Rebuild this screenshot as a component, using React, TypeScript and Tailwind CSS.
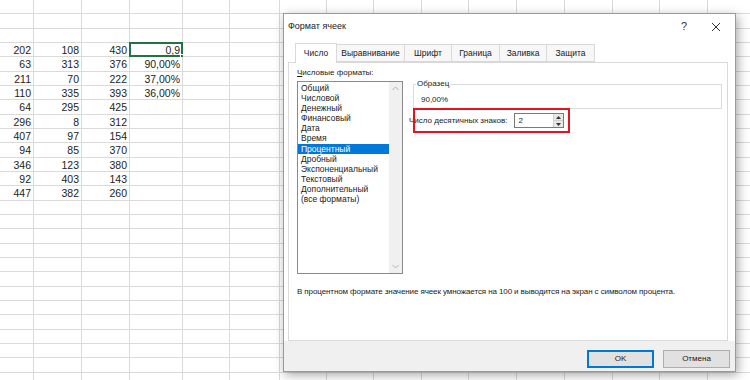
import React from 'react';

const colWidths = [34, 48, 48, 53, 47, 50, 47, 47, 48, 47, 48, 48, 48, 47, 48, 48, 48];

const data: string[][] = [
  ['202', '108', '430', '0,9'],
  ['63', '313', '376', '90,00%'],
  ['211', '70', '222', '37,00%'],
  ['110', '335', '393', '36,00%'],
  ['64', '295', '425', ''],
  ['296', '8', '312', ''],
  ['407', '97', '154', ''],
  ['94', '85', '370', ''],
  ['346', '123', '380', ''],
  ['92', '403', '143', ''],
  ['447', '382', '260', ''],
];

const formats = [
  'Общий',
  'Числовой',
  'Денежный',
  'Финансовый',
  'Дата',
  'Время',
  'Процентный',
  'Дробный',
  'Экспоненциальный',
  'Текстовый',
  'Дополнительный',
  '(все форматы)',
];

const tabs = [
  { label: 'Число', w: 'w-[42px]' },
  { label: 'Выравнивание', w: 'w-[68px]' },
  { label: 'Шрифт', w: 'w-[47px]' },
  { label: 'Граница', w: 'w-[48px]' },
  { label: 'Заливка', w: 'w-[47px]' },
  { label: 'Защита', w: 'w-[48px]' },
];

const Sheet: React.FC = () => {
  const rows = 27;
  return (
    <div className="flex flex-col">
      {Array.from({ length: rows }).map((_, r) => {
        const rowData = r >= 3 ? data[r - 3] : undefined;
        return (
          <div key={r} className="flex h-[14.33px] shrink-0">
            {colWidths.map((w, c) => {
              const val = rowData && c < 4 ? rowData[c] : '';
              const selected = r === 3 && c === 3;
              return (
                <div
                  key={c}
                  style={{ width: w }}
                  className="relative shrink-0 border-r border-b border-[#dadada] text-right pr-[2px] text-[10.5px] leading-[14px] text-[#222]"
                >
                  {val}
                  {selected && (
                    <div className="absolute -left-px -top-px w-[54px] h-[15.5px] border-2 border-[#217346]">
                      <div className="absolute -right-[3px] -bottom-[3px] w-[4px] h-[4px] bg-[#217346] border border-white" />
                    </div>
                  )}
                </div>
              );
            })}
          </div>
        );
      })}
    </div>
  );
};

const Dialog: React.FC = () => {
  return (
    <div className="absolute left-[283px] top-[13px] w-[453px] h-[359px] bg-[#f0f0f0] border border-[#9a9a9a] shadow-[2px_3px_10px_rgba(0,0,0,0.35)] flex flex-col text-[8px] text-[#1a1a1a]">
      {/* title bar */}
      <div className="h-[25px] bg-white flex items-center pl-[4px] pr-[14px]">
        <span className="text-[9px] text-[#222] flex-1">Формат ячеек</span>
        <span className="text-[11px] text-[#333] mr-[24px]">?</span>
        <svg width="10" height="10" viewBox="0 0 10 10">
          <path d="M1 1 L9 9 M9 1 L1 9" stroke="#333" strokeWidth="1" />
        </svg>
      </div>
      {/* tab strip */}
      <div className="bg-white flex-1 flex flex-col pl-[4px] pr-[7px]">
        <div className="flex h-[23px] pt-[4px] pl-[7px] items-end text-[8.5px]">
          {tabs.map((t, i) => (
            <div
              key={t.label}
              className={
                i === 0
                  ? `${t.w} h-[20px] bg-white border border-b-0 border-[#d9d9d9] flex items-center justify-center -mb-px relative z-10`
                  : `${t.w} h-[18px] bg-[#f7f7f7] border border-l-0 border-[#d9d9d9] flex items-center justify-center`
              }
            >
              {t.label}
            </div>
          ))}
        </div>
        {/* panel */}
        <div className="relative flex-1 bg-white border border-[#d9d9d9] mb-[30px] flex flex-col pl-[8px] pt-[4px]">
          <div className="leading-[12px]">
            <span className="underline">Ч</span>исловые форматы:
          </div>
          <div className="flex mt-[2px]">
            <div className="w-[106px] h-[193px] border border-[#8a8a8a] flex">
              <div className="flex-1 flex flex-col pt-px text-[8.5px]">
                {formats.map((f) => (
                  <div
                    key={f}
                    className={
                      f === 'Процентный'
                        ? 'h-[10.1px] leading-[10px] pl-[3px] bg-[#0078d7] text-white'
                        : 'h-[10.1px] leading-[10px] pl-[3px]'
                    }
                  >
                    {f}
                  </div>
                ))}
              </div>
              <div className="w-[13px] bg-[#f0f0f0] flex flex-col justify-between items-center py-[4px]">
                <svg width="7" height="5" viewBox="0 0 7 5">
                  <path d="M0.5 4 L3.5 1 L6.5 4" stroke="#b0b0b0" strokeWidth="1" fill="none" />
                </svg>
                <svg width="7" height="5" viewBox="0 0 7 5">
                  <path d="M0.5 1 L3.5 4 L6.5 1" stroke="#b0b0b0" strokeWidth="1" fill="none" />
                </svg>
              </div>
            </div>
            <div className="flex flex-col ml-[10px] mt-[3px]">
              {/* sample groupbox */}
              <div className="relative w-[309px] h-[25px] border border-[#dcdcdc]">
                <span className="absolute left-[2px] -top-[7px] bg-white px-px leading-[12px]">Образец</span>
                <div className="pl-[7px] pt-[9px] leading-[12px]">90,00%</div>
              </div>
              {/* decimal places, highlighted */}
              <div className="relative w-[157px] h-[25px] mt-[-1px] flex items-center">
                <span className="ml-[-4px] mr-[7px] whitespace-nowrap">Число десятичных знаков:</span>
                <div className="w-[50px] h-[15px] border border-[#7a7a7a] flex bg-white">
                  <span className="flex-1 pl-[3px] leading-[13px]">2</span>
                  <div className="w-[10px] flex flex-col border-l border-[#d0d0d0]">
                    <div className="flex-1 bg-[#e8e8e8] flex items-center justify-center border-b border-[#cfcfcf]">
                      <svg width="5" height="3" viewBox="0 0 5 3">
                        <path d="M0 3 L2.5 0 L5 3Z" fill="#333" />
                      </svg>
                    </div>
                    <div className="flex-1 bg-[#e8e8e8] flex items-center justify-center">
                      <svg width="5" height="3" viewBox="0 0 5 3">
                        <path d="M0 0 L2.5 3 L5 0Z" fill="#333" />
                      </svg>
                    </div>
                  </div>
                </div>
                <div className="absolute inset-0 border-[2.5px] border-[#e3141f]" />
              </div>
            </div>
          </div>
          <div className="mt-[12px] leading-[12px] tracking-[-0.1px] whitespace-nowrap">
            В процентном формате значение ячеек умножается на 100 и выводится на экран с символом процента.
          </div>
        </div>
      </div>
      {/* buttons */}
      <div className="absolute left-0 right-0 bottom-0 h-[30px] bg-[#f0f0f0] flex items-center justify-end gap-[9px] pr-[5px] pt-[5px]">
        <div className="w-[67px] h-[18px] bg-[#e1e1e1] border border-[#0078d7] shadow-[inset_0_0_0_1px_#0078d7] flex items-center justify-center">
          OK
        </div>
        <div className="w-[67px] h-[18px] bg-[#e1e1e1] border border-[#adadad] flex items-center justify-center">
          Отмена
        </div>
      </div>
    </div>
  );
};

export default function App() {
  return (
    <div
      className="relative w-[750px] h-[380px] overflow-hidden bg-white"
      style={{ fontFamily: '"Liberation Sans", Arial, sans-serif' }}
    >
      <Sheet />
      <Dialog />
    </div>
  );
}
